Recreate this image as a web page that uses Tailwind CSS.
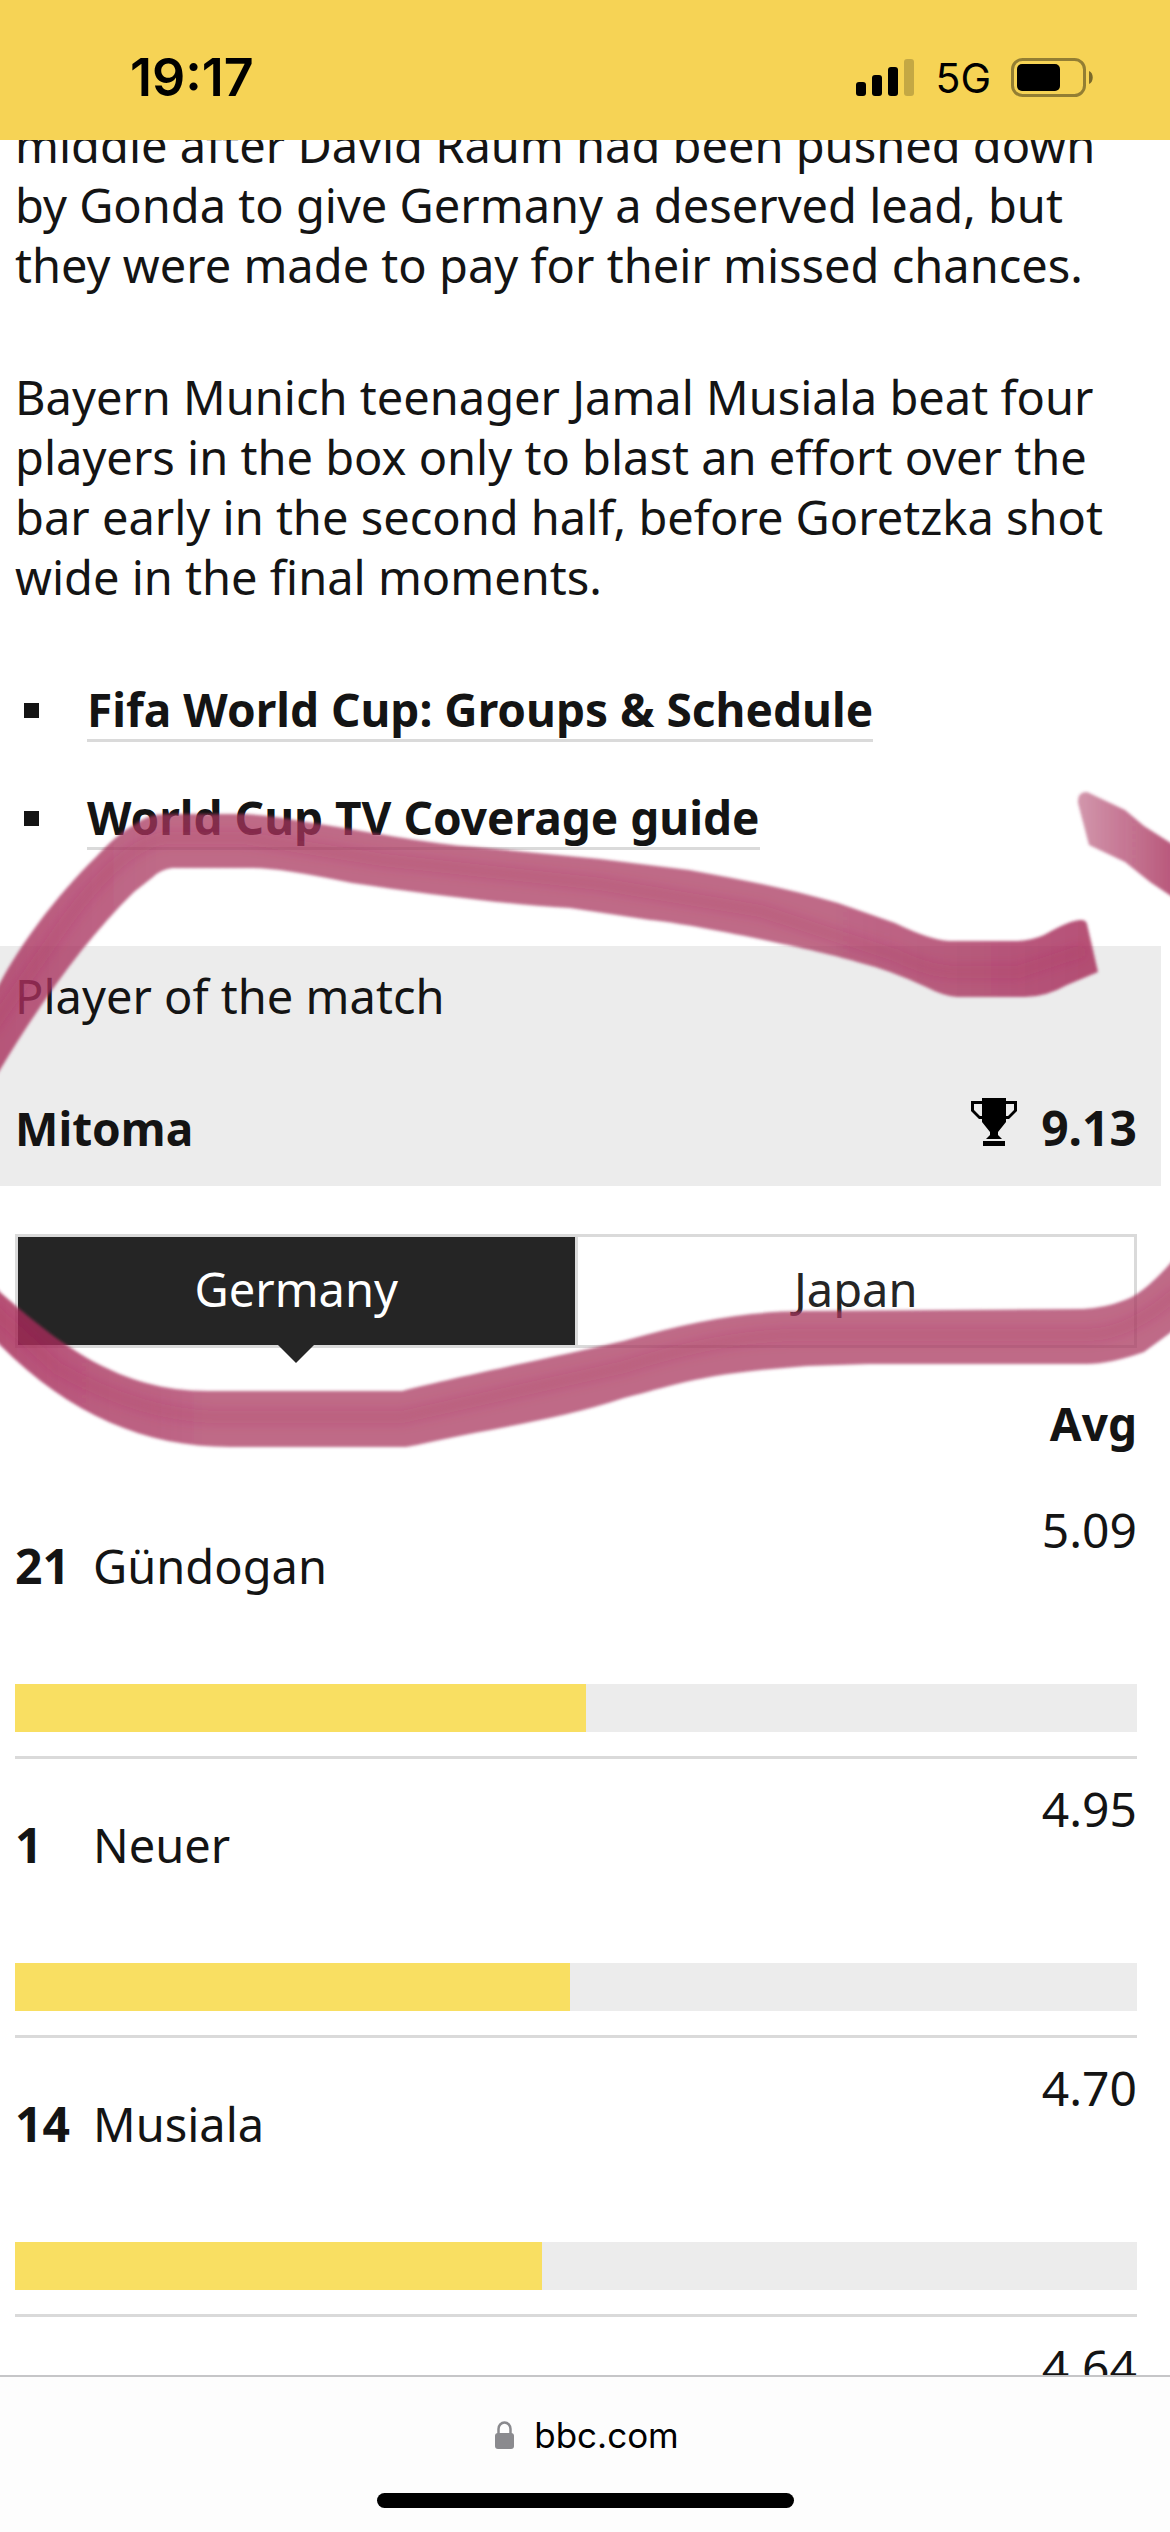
<!DOCTYPE html>
<html lang="en">
<head>
    <meta charset="UTF-8">
    <meta name="viewport" content="width=device-width, initial-scale=1.0">
    <title>Germany v Japan - BBC Sport</title>
    <script src="https://cdn.jsdelivr.net/npm/@tailwindcss/browser@4"></script>
</head>
<body class="flex h-screen flex-col overflow-hidden bg-white font-['Noto_Sans',sans-serif] text-[47px] leading-[60px] text-[#141414]">
    <!-- Status bar -->
    <header class="flex h-[140px] shrink-0 items-center justify-between bg-[#f6d355] pt-4 pr-[76px] pl-[130px] font-['Inter',sans-serif] text-black">
        <time class="text-[52px] font-semibold">19:17</time>
        <div class="flex items-center gap-5">
            <svg class="h-[38px] w-[59px]" viewBox="0 0 59 38" aria-hidden="true">
                <rect x="0" y="23" width="10" height="14" rx="3"/>
                <rect x="16" y="16" width="10" height="21" rx="3"/>
                <rect x="32" y="8" width="10" height="29" rx="3"/>
                <rect x="48" y="0" width="10" height="37" rx="3" opacity=".2"/>
            </svg>
            <span class="text-[41px]">5G</span>
            <svg class="h-[40px] w-[83px]" viewBox="0 0 83 40" aria-hidden="true">
                <rect x="1.5" y="1.5" width="72" height="36" rx="10" fill="none" stroke="#000" stroke-opacity=".4" stroke-width="3"/>
                <rect x="6" y="6" width="43" height="27" rx="5"/>
                <path d="M78 13c5 2 5 11 0 13z" opacity=".5"/>
            </svg>
        </div>
    </header>

    <main class="relative min-h-0 flex-1 overflow-hidden">
        <!-- Article text -->
        <article class="-mt-[25px] px-[15px]">
            <p>middle after David Raum had been pushed down<br>by Gonda to give Germany a deserved lead, but<br>they were made to pay for their missed chances.</p>
            <p class="mt-[72px]">Bayern Munich teenager Jamal Musiala beat four<br>players in the box only to blast an effort over the<br>bar early in the second half, before Goretzka shot<br>wide in the final moments.</p>
            <ul class="mt-[72px] space-y-[45px] text-[46px] font-bold">
                <li class="flex items-center gap-[48px] pl-[9px]">
                    <span class="size-[15px] bg-[#141414]"></span>
                    <a href="#" class="border-b-3 border-[#dadada]">Fifa World Cup: Groups &amp; Schedule</a>
                </li>
                <li class="flex items-center gap-[48px] pl-[9px]">
                    <span class="size-[15px] bg-[#141414]"></span>
                    <a href="#" class="border-b-3 border-[#dadada]">World Cup TV Coverage guide</a>
                </li>
            </ul>
        </article>

        <!-- Player of the match -->
        <section class="mt-24 mr-[9px] bg-[#ececec] pt-5 pr-6 pb-[28px] pl-[15px]">
            <h2>Player of the match</h2>
            <div class="mt-[72px] flex items-center font-bold">
                <p class="flex-1 text-[46px]">Mitoma</p>
                <svg class="mr-6 mb-3 h-[48px] w-[46px]" viewBox="0 0 46 48" fill="#000" aria-hidden="true">
                    <path d="M11 0H35V3H46V13L38 21H35V24L27 34V37L31 41H15L19 37V34L11 24V21H8L0 13V3H11ZM11 6H3V12L9 18H11ZM35 6V18H37L43 12V6Z" fill-rule="evenodd"/>
                    <rect x="12" y="43" width="22" height="5"/>
                </svg>
                <p class="text-[48px]">9.13</p>
            </div>
        </section>

        <!-- Player ratings -->
        <section class="mt-[48px] mr-[33px] ml-[15px]">
            <div class="flex border-3 border-[#dadada] text-center" role="tablist">
                <button type="button" role="tab" aria-selected="true" class="relative h-[108px] flex-1 border-r-3 border-[#dadada] bg-[#252525] bg-clip-padding pb-1 text-white">
                    Germany
                    <svg class="absolute top-full left-1/2 h-[18px] w-[36px] -translate-x-1/2" viewBox="0 0 36 18" aria-hidden="true"><path d="M0 0H36L18 18Z" fill="#252525"/></svg>
                </button>
                <button type="button" role="tab" aria-selected="false" class="h-[108px] flex-1 pb-1 text-[#252525]">Japan</button>
            </div>
            <table class="mt-[45px] w-full">
                <thead>
                    <tr>
                        <td class="w-[78px]"></td>
                        <td></td>
                        <th class="pb-[27px] text-right text-[46px] font-bold">Avg</th>
                    </tr>
                </thead>
                <tbody>
                    <tr>
                        <th class="h-[204px] pt-[56px] text-left align-top text-[48px] font-bold">21</th>
                        <td class="pt-[56px] align-top">Gündogan</td>
                        <td class="pt-5 text-right align-top text-[48px]">5.09</td>
                    </tr>
                    <tr>
                        <td colspan="3"><div class="h-[48px] bg-[#ececec]"><div class="h-full bg-[#f9df62]" style="width: 50.9%"></div></div><div class="mt-6 h-[3px] bg-[#dadada]"></div></td>
                    </tr>
                    <tr>
                        <th class="h-[204px] pt-[56px] text-left align-top text-[48px] font-bold">1</th>
                        <td class="pt-[56px] align-top">Neuer</td>
                        <td class="pt-5 text-right align-top text-[48px]">4.95</td>
                    </tr>
                    <tr>
                        <td colspan="3"><div class="h-[48px] bg-[#ececec]"><div class="h-full bg-[#f9df62]" style="width: 49.5%"></div></div><div class="mt-6 h-[3px] bg-[#dadada]"></div></td>
                    </tr>
                    <tr>
                        <th class="h-[204px] pt-[56px] text-left align-top text-[48px] font-bold">14</th>
                        <td class="pt-[56px] align-top">Musiala</td>
                        <td class="pt-5 text-right align-top text-[48px]">4.70</td>
                    </tr>
                    <tr>
                        <td colspan="3"><div class="h-[48px] bg-[#ececec]"><div class="h-full bg-[#f9df62]" style="width: 47%"></div></div><div class="mt-6 h-[3px] bg-[#dadada]"></div></td>
                    </tr>
                    <tr>
                        <th></th>
                        <td></td>
                        <td class="pt-5 text-right align-top text-[48px]">4.64</td>
                    </tr>
                </tbody>
            </table>
        </section>

        <!-- Marker strokes drawn over the page -->
        <svg class="pointer-events-none absolute top-0 left-0 w-full" viewBox="0 140 1170 1400" aria-hidden="true">
            <defs>
                <filter id="soft" x="-5%" y="-10%" width="110%" height="120%"><feGaussianBlur stdDeviation="1.5"/></filter>
                <filter id="grain" x="-5%" y="-20%" width="110%" height="140%"><feGaussianBlur stdDeviation="6"/></filter>
                <linearGradient id="top" gradientUnits="userSpaceOnUse" x1="0" y1="0" x2="1100" y2="0">
                    <stop offset="0" stop-color="#a8305c" stop-opacity=".8"/>
                    <stop offset=".15" stop-color="#a8345e" stop-opacity=".74"/>
                    <stop offset=".75" stop-color="#a8345e" stop-opacity=".74"/>
                    <stop offset="1" stop-color="#a62a58" stop-opacity=".82"/>
                </linearGradient>
                <linearGradient id="bottom" gradientUnits="userSpaceOnUse" x1="0" y1="0" x2="1170" y2="0">
                    <stop offset="0" stop-color="#a62a58" stop-opacity=".82"/>
                    <stop offset=".18" stop-color="#a8345e" stop-opacity=".74"/>
                    <stop offset="1" stop-color="#a8345e" stop-opacity=".74"/>
                </linearGradient>
                <linearGradient id="corner" gradientUnits="userSpaceOnUse" x1="1078" y1="0" x2="1170" y2="0">
                    <stop offset="0" stop-color="#a8345e" stop-opacity=".52"/>
                    <stop offset="1" stop-color="#a8305c" stop-opacity=".8"/>
                </linearGradient>
            </defs>
            <g filter="url(#soft)">
                <path fill="url(#top)" d="M-10 1000L0 983C20 945 55 897 96 857Q118 833 134 825Q148 814 165 814H245Q275 816 306 822C360 830 430 844 475 847L600 859L689 870C740 879 790 889 838 903L895 923Q930 940 949 941H1018Q1033 940 1044 935Q1070 920 1081 920Q1086 920 1087 924L1098 972L1067 985Q1046 997 1025 997H957Q943 996 926 987Q890 970 857 962C830 953 700 925 650 920L570 908C500 904 420 893 352 883Q280 868 253 868H172Q160 870 153 877L134 892C90 935 45 995 0 1070L-10 1086Z"/>
                <path fill="url(#corner)" d="M1078 803Q1077 792 1087 792L1125 810L1144 826L1180 849V902L1150 882L1125 862L1089 845Z"/>
                <path fill="url(#bottom)" d="M-10 1280L0 1292C60 1345 120 1391 207 1391H402C470 1374 610 1345 627 1340C690 1322 745 1311 807 1311L1083 1309Q1105 1308 1125 1300Q1146 1293 1180 1252V1322L1170 1333L1144 1352Q1110 1364 1087 1364H869L807 1366L761 1370C690 1377 654 1391 624 1398C560 1420 480 1430 417 1445L406 1447H230C145 1447 70 1415 0 1345L-10 1334Z"/>
            </g>
            <g filter="url(#grain)" fill="none" stroke="#a82e5c" stroke-opacity=".2" stroke-width="12">
                <path d="M-10 1030L60 930Q120 845 165 838H245L383 860L600 884L761 911L895 955Q930 972 957 972H1018L1085 950"/>
                <path d="M-10 1307L57 1368Q140 1415 215 1417H402L624 1367Q730 1333 807 1335H1087Q1130 1335 1180 1290"/>
            </g>
        </svg>
    </main>

    <!-- Browser bar -->
    <footer class="flex h-[157px] shrink-0 flex-col items-center justify-between border-t-2 border-[#c6c6c8] bg-[#fdfdfd] pt-[28px] pb-6 font-['Inter',sans-serif] text-black">
        <a href="#" class="flex items-center gap-5 pl-1 text-[35px]">
            <svg class="h-[28px] w-[19px]" viewBox="0 0 19 28" aria-hidden="true">
                <rect x="0" y="12" width="19" height="16" rx="3" fill="#8a8a8e"/>
                <path d="M3.500 13V8a6 6.500 0 0 1 12 0v5" fill="none" stroke="#8a8a8e" stroke-width="2.500"/>
            </svg>
            bbc.com
        </a>
        <div class="h-[15px] w-[417px] rounded-full bg-black"></div>
    </footer>
</body>
</html>
